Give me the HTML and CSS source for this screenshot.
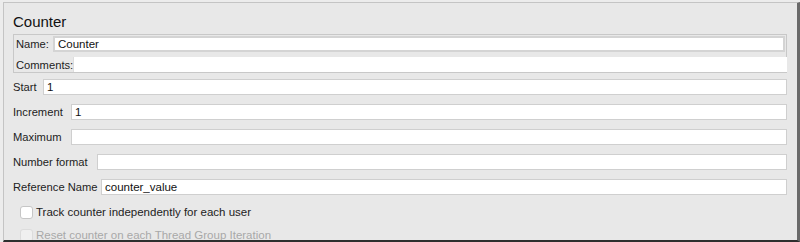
FILE: index.html
```html
<!DOCTYPE html>
<html lang="en">
<head>
    <meta charset="UTF-8">
    <title>Counter</title>
    <link rel="stylesheet" href="styles.css">
</head>
<body>
    <div class="panel">
        <div class="title">Counter</div>
        <div class="name-box">
            <div class="row name-row">
                <label>Name:</label>
                <input type="text" value="Counter">
            </div>
            <div class="row comments-row">
                <label>Comments:</label>
                <input type="text" value="">
            </div>
        </div>
        <div class="fields">
            <div class="row">
                <label class="w-start">Start</label>
                <input type="text" value="1">
            </div>
            <div class="row">
                <label class="w-mid">Increment</label>
                <input type="text" value="1">
            </div>
            <div class="row">
                <label class="w-mid">Maximum</label>
                <input type="text" value="">
            </div>
            <div class="row">
                <label class="w-format">Number format</label>
                <input type="text" value="">
            </div>
            <div class="row">
                <label class="w-ref">Reference Name</label>
                <input type="text" value="counter_value">
            </div>
        </div>
        <div class="check">
            <span class="box"></span>
            <span>Track counter independently for each user</span>
        </div>
        <div class="check disabled">
            <span class="box"></span>
            <span>Reset counter on each Thread Group Iteration</span>
        </div>
    </div>
</body>
</html>
```

FILE: styles.css
```css
* {
    margin: 0;
    padding: 0;
    box-sizing: border-box;
    font-family: "Liberation Sans", Arial, sans-serif;
}

html, body {
    height: 100%;
    overflow: hidden;
}

body {
    background: #ececec;
    padding: 2px 0 0 3px;
}

.panel {
    background: #e8e8e8;
    border-top: 1px solid #c4c4c4;
    border-left: 1px solid #c4c4c4;
    border-right: 3px solid #6a6a6a;
    border-bottom: 2px solid #2e2e2e;
    width: 797px;
    height: 240px;
    padding: 0 10px 0 9px;
    font-size: 11.2px;
    color: #222;
    overflow: hidden;
}

.title {
    font-size: 15px;
    height: 31px;
    padding-top: 10px;
    color: #111;
}

.name-box {
    border: 1px solid #c8c8c8;
    width: 774px;
    height: 39px;
    padding: 1px 0 0 2px;
}

.row {
    display: flex;
    align-items: center;
}

.row label {
    white-space: nowrap;
    flex-shrink: 0;
}

.row input {
    flex: 1;
    height: 16px;
    border: 1px solid #cfcfcf;
    background: #fff;
    font-size: 11.5px;
    padding: 0 3px;
    color: #111;
    outline: none;
}

.name-row label {
    width: 37px;
}

.name-row input {
    margin-right: 1px;
    border-width: 2px;
    border-color: #d4d4d4;
}

.comments-row {
    margin-top: 5px;
}

.comments-row label {
    width: 57px;
}

.comments-row input {
    height: 15px;
    border: none;
    border-left: 1px solid #ddd;
    margin-right: -1px;
}

.w-start { width: 30px; }
.w-mid { width: 58px; }
.w-format { width: 84px; }
.w-ref { width: 88px; }

.fields {
    display: flex;
    flex-direction: column;
    gap: 9px;
    margin-top: 6px;
}

.check {
    display: flex;
    align-items: center;
    gap: 3px;
    margin: 10px 0 0 7px;
    height: 14px;
    font-size: 11.5px;
}

.check + .check {
    margin-top: 9px;
}

.box {
    width: 13px;
    height: 13px;
    background: #fff;
    border: 1px solid #c6c6c6;
    border-radius: 3px;
}

.disabled {
    color: #a8a8a8;
}

.disabled .box {
    background: #f0f0f0;
    border-color: #dcdcdc;
}
```
